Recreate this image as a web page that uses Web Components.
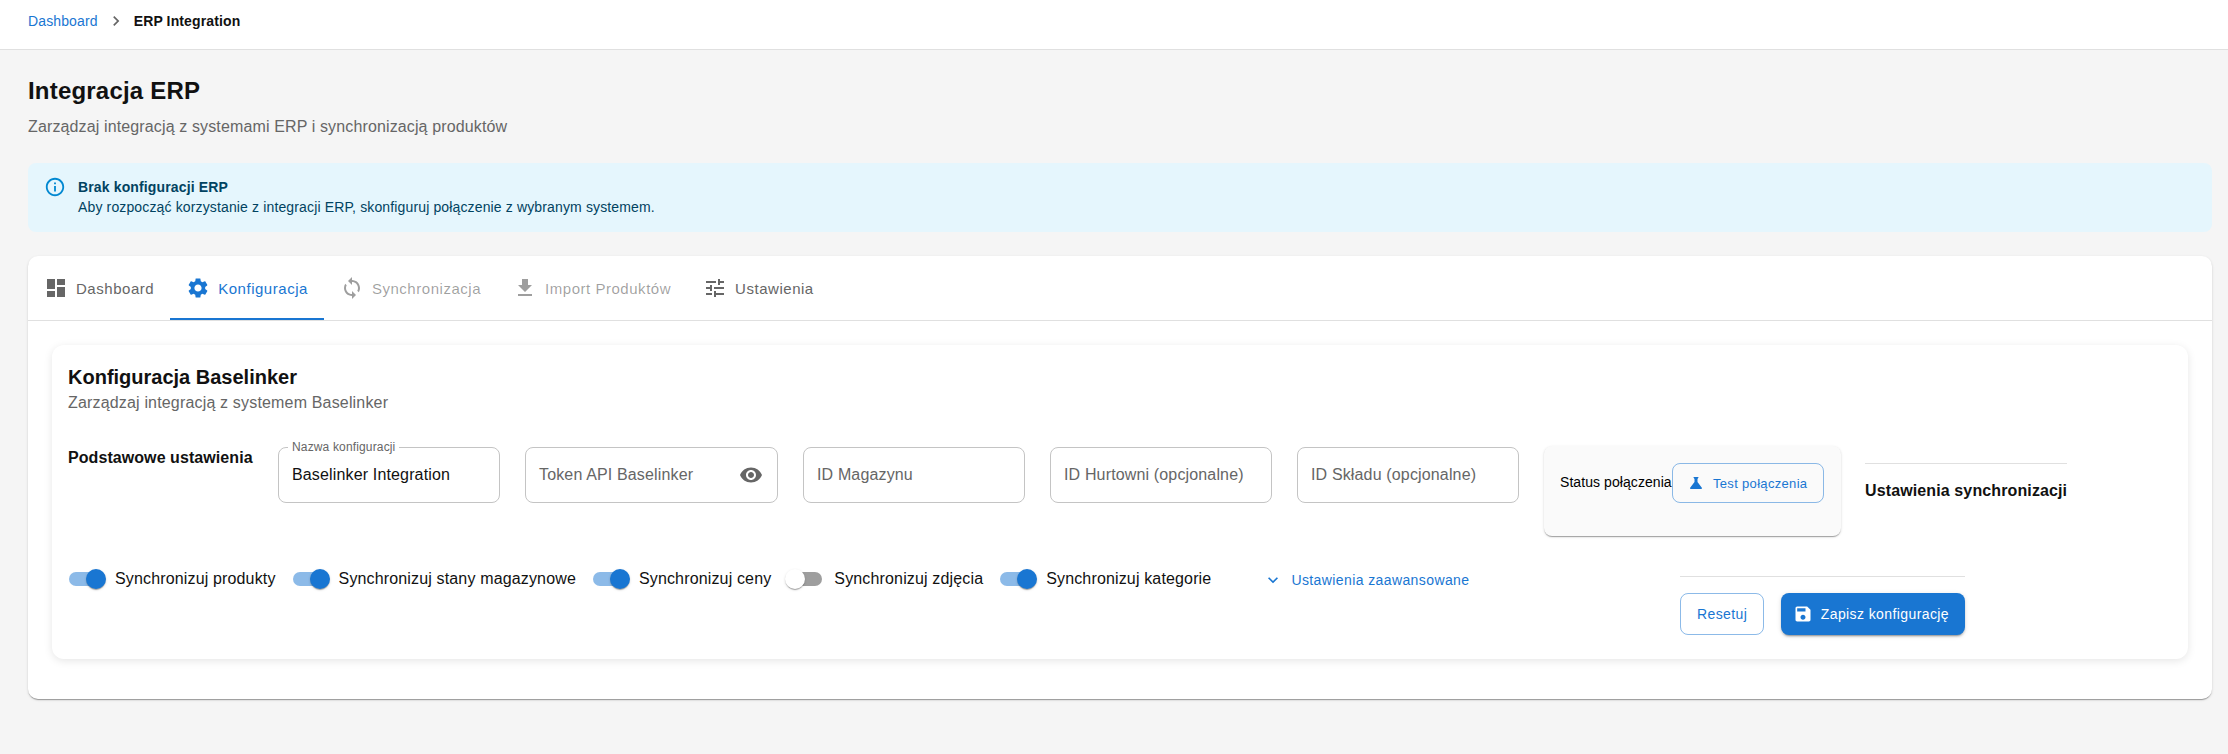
<!DOCTYPE html>
<html lang="pl">
<head>
<meta charset="utf-8">
<title>Integracja ERP</title>
<style>
  html, body { margin: 0; height: 100%; }
  body { background: #f5f5f5; color: #000; font-family: "Liberation Sans", Arial, sans-serif; overflow: hidden; }
</style>
</head>
<body>
<erp-page>
  <erp-breadcrumb slot="header" parent="Dashboard" current="ERP Integration"></erp-breadcrumb>
  <erp-page-title title="Integracja ERP" subtitle="Zarządzaj integracją z systemami ERP i synchronizacją produktów"></erp-page-title>
  <erp-alert heading="Brak konfiguracji ERP">Aby rozpocząć korzystanie z integracji ERP, skonfiguruj połączenie z wybranym systemem.</erp-alert>
  <erp-panel>
    <erp-tabs>
      <erp-tab icon="dashboard">Dashboard</erp-tab>
      <erp-tab icon="settings" selected>Konfiguracja</erp-tab>
      <erp-tab icon="sync" disabled>Synchronizacja</erp-tab>
      <erp-tab icon="download" disabled>Import Produktów</erp-tab>
      <erp-tab icon="tune">Ustawienia</erp-tab>
    </erp-tabs>
    <erp-config-card title="Konfiguracja Baselinker" subtitle="Zarządzaj integracją z systemem Baselinker">
      <erp-section-title slot="basic" style="width:185px">Podstawowe ustawienia</erp-section-title>
      <erp-field slot="basic" label="Nazwa konfiguracji" value="Baselinker Integration" style="width:222px"></erp-field>
      <erp-field slot="basic" placeholder="Token API Baselinker" icon="visibility" style="width:253px"></erp-field>
      <erp-field slot="basic" placeholder="ID Magazynu" style="width:222px"></erp-field>
      <erp-field slot="basic" placeholder="ID Hurtowni (opcjonalne)" style="width:222px"></erp-field>
      <erp-field slot="basic" placeholder="ID Składu (opcjonalne)" style="width:222px"></erp-field>
      <erp-status slot="basic" label="Status połączenia">
        <erp-button variant="outlined" icon="science" size="small">Test połączenia</erp-button>
      </erp-status>
      <erp-sync-head slot="basic">Ustawienia synchronizacji</erp-sync-head>

      <erp-switch slot="toggles" checked>Synchronizuj produkty</erp-switch>
      <erp-switch slot="toggles" checked>Synchronizuj stany magazynowe</erp-switch>
      <erp-switch slot="toggles" checked>Synchronizuj ceny</erp-switch>
      <erp-switch slot="toggles">Synchronizuj zdjęcia</erp-switch>
      <erp-switch slot="toggles" checked>Synchronizuj kategorie</erp-switch>
      <erp-button slot="advanced" variant="text" icon="expand">Ustawienia zaawansowane</erp-button>
      <erp-button slot="actions" variant="outlined">Resetuj</erp-button>
      <erp-button slot="actions" variant="contained" icon="save">Zapisz konfigurację</erp-button>
    </erp-config-card>
  </erp-panel>
</erp-page>

<script>
// Material icon paths, all on a 24x24 grid
const ICONS = {
  dashboard: 'M3 13h8V3H3v10zm0 8h8v-6H3v6zm10 0h8V11h-8v10zm0-18v6h8V3h-8z',
  settings: 'M19.14 12.94c.04-.3.06-.61.06-.94 0-.32-.02-.64-.07-.94l2.03-1.58c.18-.14.23-.41.12-.61l-1.92-3.32c-.12-.22-.37-.29-.59-.22l-2.39.96c-.5-.38-1.03-.7-1.62-.94l-.36-2.54c-.04-.24-.24-.41-.48-.41h-3.84c-.24 0-.43.17-.47.41l-.36 2.54c-.59.24-1.13.57-1.62.94l-2.39-.96c-.22-.08-.47 0-.59.22L2.74 8.87c-.12.21-.08.47.12.61l2.03 1.58c-.05.3-.09.63-.09.94s.02.64.07.94l-2.03 1.58c-.18.14-.23.41-.12.61l1.92 3.32c.12.22.37.29.59.22l2.39-.96c.5.38 1.03.7 1.62.94l.36 2.54c.05.24.24.41.48.41h3.84c.24 0 .44-.17.47-.41l.36-2.54c.59-.24 1.13-.56 1.62-.94l2.39.96c.22.08.47 0 .59-.22l1.92-3.32c.12-.22.07-.47-.12-.61l-2.01-1.58zM12 15.6c-1.98 0-3.6-1.62-3.6-3.6s1.62-3.6 3.6-3.6 3.6 1.62 3.6 3.6-1.62 3.6-3.6 3.6z',
  sync: 'M12 4V1L8 5l4 4V6c3.31 0 6 2.69 6 6 0 1.01-.25 1.97-.7 2.8l1.46 1.46C19.54 15.03 20 13.57 20 12c0-4.42-3.58-8-8-8zm0 14c-3.31 0-6-2.69-6-6 0-1.01.25-1.97.7-2.8L5.24 7.74C4.46 8.97 4 10.43 4 12c0 4.42 3.58 8 8 8v3l4-4-4-4v3z',
  download: 'M19 9h-4V3H9v6H5l7 7 7-7zM5 18v2h14v-2H5z',
  tune: 'M3 17v2h6v-2H3zM3 5v2h10V5H3zm10 16v-2h8v-2h-8v-2h-2v6h2zM7 9v2H3v2h4v2h2V9H7zm14 4v-2H11v2h10zm-6-4h2V7h4V5h-4V3h-2v6z',
  visibility: 'M12 4.5C7 4.5 2.73 7.61 1 12c1.73 4.39 6 7.5 11 7.5s9.27-3.11 11-7.5c-1.73-4.39-6-7.5-11-7.5zM12 17c-2.76 0-5-2.24-5-5s2.24-5 5-5 5 2.24 5 5-2.24 5-5 5zm0-8c-1.66 0-3 1.34-3 3s1.34 3 3 3 3-1.34 3-3-1.34-3-3-3z',
  science: 'M19.8 18.4 14 10.67V6.5l1.35-1.69c.26-.33.03-.81-.39-.81H9.04c-.42 0-.65.48-.39.81L10 6.5v4.17L4.2 18.4c-.49.66-.02 1.6.8 1.6h14c.82 0 1.29-.94.8-1.6z',
  save: 'M17 3H5c-1.11 0-2 .9-2 2v14c0 1.1.89 2 2 2h14c1.1 0 2-.9 2-2V7l-4-4zm-5 16c-1.66 0-3-1.34-3-3s1.34-3 3-3 3 1.34 3 3-1.34 3-3 3zm3-10H5V5h10v4z',
  expand: 'M16.59 8.59 12 13.17 7.41 8.59 6 10l6 6 6-6z',
  info: 'M11 7h2v2h-2zm0 4h2v6h-2zm1-9C6.48 2 2 6.48 2 12s4.48 10 10 10 10-4.48 10-10S17.52 2 12 2zm0 18c-4.41 0-8-3.59-8-8s3.59-8 8-8 8 3.59 8 8-3.59 8-8 8z',
  next: 'M10 6 8.59 7.41 13.17 12l-4.58 4.59L10 18l6-6z'
};

const svgIcon = (name, size) =>
  `<svg width="${size}" height="${size}" viewBox="0 0 24 24" fill="currentColor" aria-hidden="true"><path d="${ICONS[name]}"/></svg>`;

// small helper so every element gets an open shadow root the same way
class ShadowEl extends HTMLElement {
  constructor() {
    super();
    this.attachShadow({ mode: 'open' });
  }
  connectedCallback() { this.shadowRoot.innerHTML = this.render(); }
  attr(name, fallback = '') { return this.getAttribute(name) ?? fallback; }
}

customElements.define('erp-page', class extends ShadowEl {
  render() {
    return `<style>
      :host { display: block; }
      header { height: 42px; padding: 0 28px 7px; background: #fff; border-bottom: 1px solid #e0e0e0; display: flex; align-items: center; }
      main { padding: 25px 16px 0 28px; }
    </style>
    <header><slot name="header"></slot></header>
    <main><slot></slot></main>`;
  }
});

customElements.define('erp-breadcrumb', class extends ShadowEl {
  render() {
    return `<style>
      :host { display: flex; align-items: center; font-size: 14px; line-height: 20px; letter-spacing: .13px; }
      a { color: #1976d2; text-decoration: none; }
      svg { margin: 0 8px; color: #666; }
      b { font-weight: 700; color: #111; }
    </style>
    <a href="#">${this.attr('parent')}</a>${svgIcon('next', 20)}<b>${this.attr('current')}</b>`;
  }
});

customElements.define('erp-page-title', class extends ShadowEl {
  render() {
    return `<style>
      :host { display: block; }
      h1 { margin: 0; font-size: 24px; line-height: 32px; font-weight: 700; color: #111; letter-spacing: .2px; }
      p { margin: 8px 0 0; font-size: 16px; line-height: 24px; color: #666; letter-spacing: .13px; }
    </style>
    <h1>${this.attr('title')}</h1><p>${this.attr('subtitle')}</p>`;
  }
});

customElements.define('erp-alert', class extends ShadowEl {
  render() {
    return `<style>
      :host { display: flex; margin-top: 24px; padding: 6px 16px 7px; background: #e5f6fd; border-radius: 8px; color: #014361; font-size: 14px; line-height: 20px; letter-spacing: .14px; }
      .icon { padding: 7px 0; margin-right: 12px; color: #0288d1; display: flex; }
      .msg { padding: 8px 0; }
      strong { display: block; font-weight: 700; }
    </style>
    <div class="icon">${svgIcon('info', 22)}</div>
    <div class="msg"><strong>${this.attr('heading')}</strong><slot></slot></div>`;
  }
});

customElements.define('erp-panel', class extends ShadowEl {
  render() {
    return `<style>
      :host { display: block; margin-top: 24px; background: #fff; border-radius: 10px; padding-bottom: 40px;
        box-shadow: 0 2px 1px -1px rgba(0,0,0,.2), 0 1px 1px 0 rgba(0,0,0,.14), 0 1px 3px 0 rgba(0,0,0,.12); }
    </style><slot></slot>`;
  }
});

customElements.define('erp-tabs', class extends ShadowEl {
  render() {
    return `<style>
      :host { display: flex; padding: 0; border-bottom: 1px solid #e0e0e0; }
    </style><slot></slot>`;
  }
});

customElements.define('erp-tab', class extends ShadowEl {
  render() {
    const selected = this.hasAttribute('selected');
    const disabled = this.hasAttribute('disabled');
    const color = selected ? '#1976d2' : disabled ? 'rgba(0,0,0,.38)' : '#666';
    return `<style>
      :host { display: flex; align-items: center; gap: 8px; height: 64px; box-sizing: border-box; padding: 0 16px;
        font-size: 15px; letter-spacing: .53px; color: ${color};
        box-shadow: ${selected ? 'inset 0 -2px 0 #1976d2' : 'none'}; }
      svg { flex: none; }
    </style>${svgIcon(this.attr('icon'), 24)}<span><slot></slot></span>`;
  }
});

customElements.define('erp-config-card', class extends ShadowEl {
  render() {
    return `<style>
      :host { display: block; margin: 24px 24px 0; padding: 20px 16px 24px; background: #fff; border-radius: 12px;
        box-shadow: 0 2px 8px rgba(0,0,0,.1); }
      h2 { margin: 0; font-size: 20px; line-height: 24px; font-weight: 700; color: #111; }
      p { margin: 2px 0 0; font-size: 16px; line-height: 24px; color: #666; letter-spacing: .17px; }
      .basic { display: flex; align-items: flex-start; gap: 25px; margin-top: 31px; }
      .bottom { display: flex; align-items: flex-start; margin-top: 24px; }
      .toggles { display: flex; margin-left: -11px; }
      .advanced { margin: 2px 0 0 31px; }
      .actions { margin: 16px 0 0 auto; width: 285px; border-top: 1px solid #e0e0e0; padding-top: 16px; display: flex; justify-content: space-between; }
      .spacer { width: 207px; flex: none; }
    </style>
    <h2>${this.attr('title')}</h2>
    <p>${this.attr('subtitle')}</p>
    <div class="basic"><slot name="basic"></slot></div>
    <div class="bottom">
      <div class="toggles"><slot name="toggles"></slot></div>
      <div class="advanced"><slot name="advanced"></slot></div>
      <div class="actions"><slot name="actions"></slot></div>
      <div class="spacer"></div>
    </div>`;
  }
});

customElements.define('erp-section-title', class extends ShadowEl {
  render() {
    return `<style>
      :host { display: block; flex: none; font-size: 16px; line-height: 24px; font-weight: 700; white-space: nowrap; color: #111; letter-spacing: .07px; }
    </style><slot></slot>`;
  }
});

customElements.define('erp-field', class extends ShadowEl {
  render() {
    const label = this.attr('label');
    const value = this.attr('value');
    return `<style>
      :host { display: flex; align-items: center; flex: none; box-sizing: border-box; height: 56px; margin-top: 1px; position: relative;
        border: 1px solid #c4c4c4; border-radius: 8px; padding: 0 14px 0 13px; font-size: 16px; white-space: nowrap; letter-spacing: .15px; }
      .text { flex: 1; color: #666; }
      .value { color: #111; }
      legend { position: absolute; left: 9px; top: -8px; padding: 0 4px; background: #fff; font-size: 12px; line-height: 14px; color: #666; letter-spacing: .15px; }
      svg { color: #666; flex: none; }
    </style>
    ${label ? `<legend>${label}</legend>` : ''}
    <span class="text ${value ? 'value' : ''}">${value || this.attr('placeholder')}</span>
    ${this.hasAttribute('icon') ? svgIcon(this.attr('icon'), 24) : ''}`;
  }
});

customElements.define('erp-status', class extends ShadowEl {
  render() {
    return `<style>
      :host { display: flex; align-items: flex-start; flex: none; box-sizing: border-box; width: 297px; height: 90px; padding: 17px 16px 0;
        background: #fafafa; border-radius: 8px; font-size: 14px; white-space: nowrap;
        box-shadow: 0 2px 1px -1px rgba(0,0,0,.2), 0 1px 1px 0 rgba(0,0,0,.14), 0 1px 3px 0 rgba(0,0,0,.12); }
      span { line-height: 38px; width: 112px; flex: none; letter-spacing: .07px; }
    </style><span>${this.attr('label')}</span><slot></slot>`;
  }
});

customElements.define('erp-sync-head', class extends ShadowEl {
  render() {
    return `<style>
      :host { display: block; flex: none; margin: 17px 0 0 -1px; border-top: 1px solid #e0e0e0; padding-top: 15px;
        font-size: 16px; line-height: 24px; font-weight: 700; white-space: nowrap; color: #111; letter-spacing: .12px; }
    </style><slot></slot>`;
  }
});

customElements.define('erp-switch', class extends ShadowEl {
  render() {
    const on = this.hasAttribute('checked');
    return `<style>
      :host { display: flex; align-items: center; height: 38px; margin-right: 5px; font-size: 16px; color: #111; white-space: nowrap; letter-spacing: .15px; }
      .sw { position: relative; width: 58px; height: 38px; flex: none; }
      .track { position: absolute; left: 12px; top: 12px; width: 34px; height: 14px; border-radius: 7px;
        background: ${on ? '#1976d2' : '#000'}; opacity: ${on ? .5 : .38}; }
      .thumb { position: absolute; left: ${on ? 29 : 9}px; top: 9px; width: 20px; height: 20px; border-radius: 50%;
        background: ${on ? '#1976d2' : '#fff'};
        box-shadow: 0 2px 1px -1px rgba(0,0,0,.2), 0 1px 1px 0 rgba(0,0,0,.14), 0 1px 3px 0 rgba(0,0,0,.12); }
    </style>
    <div class="sw"><div class="track"></div><div class="thumb"></div></div><span><slot></slot></span>`;
  }
});

customElements.define('erp-button', class extends ShadowEl {
  render() {
    const variant = this.attr('variant', 'text');
    const small = this.attr('size') === 'small';
    const looks = {
      text: 'color:#1976d2;',
      outlined: 'color:#1976d2;border:1px solid rgba(25,118,210,.5);',
      contained: 'color:#fff;background:#1976d2;box-shadow:0 3px 1px -2px rgba(0,0,0,.2),0 2px 2px 0 rgba(0,0,0,.14),0 1px 5px 0 rgba(0,0,0,.12);'
    }[variant];
    const icon = this.attr('icon');
    // buttons with an icon have a tighter left padding, as in MUI
    const padLeft = !icon ? 16 : small ? 14 : variant === 'text' ? 16 : 12;
    const height = small ? 40 : variant === 'text' ? 36 : 42;
    return `<style>
      :host { display: inline-flex; align-items: center; justify-content: center; gap: 8px; box-sizing: border-box; flex: none;
        height: ${height}px; border-radius: 8px; white-space: nowrap;
        padding: 0 ${small ? 16 : 16}px 0 ${padLeft}px; font-size: ${small ? 13 : 14}px; letter-spacing: ${small ? .32 : .4}px; ${looks} }
      svg { flex: none; }
    </style>${icon ? svgIcon(icon, small ? 18 : 20) : ''}<span><slot></slot></span>`;
  }
});
</script>
</body>
</html>
